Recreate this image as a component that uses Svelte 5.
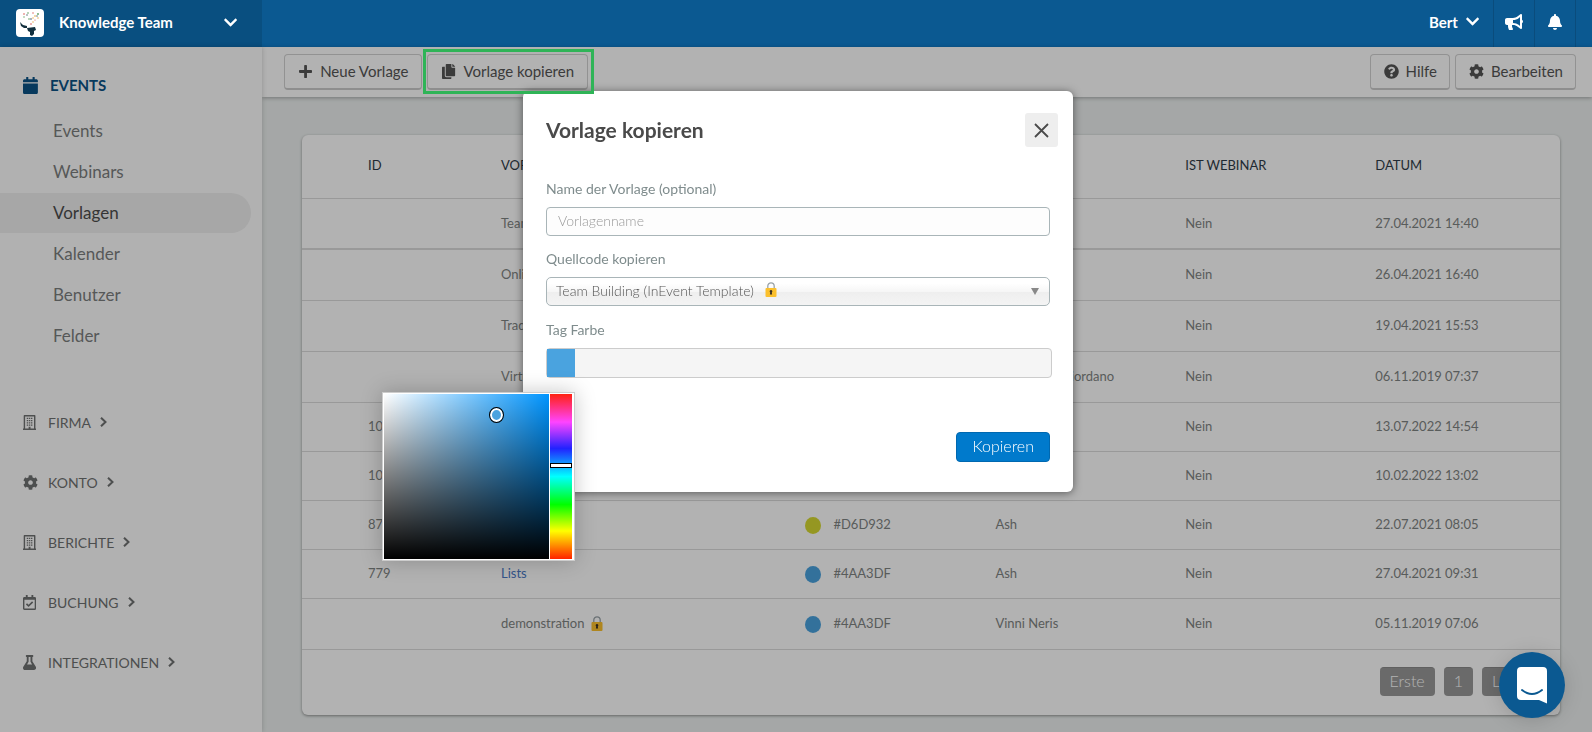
<script lang="ts">
  interface Template {
    id: string;
    name: string;
    color: string;
    author: string;
    date: string;
    locked?: boolean;
  }

  const icons = {
    chevronDown: {
      w: 448,
      d: 'M207.029 381.476L12.686 187.132c-9.373-9.373-9.373-24.569 0-33.941l22.667-22.667c9.357-9.357 24.522-9.375 33.901-.04L224 284.505l154.745-154.021c9.379-9.335 24.544-9.317 33.901.04l22.667 22.667c9.373 9.373 9.373 24.569 0 33.941L240.971 381.476c-9.373 9.372-24.569 9.372-33.942 0z',
    },
    calendar: {
      w: 448,
      d: 'M12 192h424c6.6 0 12 5.4 12 12v260c0 26.5-21.5 48-48 48H48c-26.5 0-48-21.5-48-48V204c0-6.6 5.4-12 12-12zm436-44v-36c0-26.5-21.5-48-48-48h-48V12c0-6.6-5.4-12-12-12h-40c-6.6 0-12 5.4-12 12v52H160V12c0-6.6-5.4-12-12-12h-40c-6.6 0-12 5.4-12 12v52H48C21.5 64 0 85.5 0 112v36c0 6.6 5.4 12 12 12h424c6.6 0 12-5.4 12-12z',
    },
    plus: {
      w: 448,
      d: 'M416 208H272V64c0-17.67-14.33-32-32-32h-32c-17.67 0-32 14.33-32 32v144H32c-17.67 0-32 14.33-32 32v32c0 17.67 14.33 32 32 32h144v144c0 17.67 14.33 32 32 32h32c17.67 0 32-14.33 32-32V304h144c17.67 0 32-14.33 32-32v-32c0-17.67-14.33-32-32-32z',
    },
    copy: {
      w: 448,
      d: 'M320 448v40c0 13.255-10.745 24-24 24H24c-13.255 0-24-10.745-24-24V120c0-13.255 10.745-24 24-24h72v296c0 30.879 25.121 56 56 56h168zm0-344V0H152c-13.255 0-24 10.745-24 24v368c0 13.255 10.745 24 24 24h272c13.255 0 24-10.745 24-24V128H344c-13.2 0-24-10.8-24-24zm120.971-31.029L375.029 7.029A24 24 0 0 0 358.059 0H352v96h96v-6.059a24 24 0 0 0-7.029-16.97z',
    },
    help: {
      w: 512,
      d: 'M504 256c0 136.997-111.043 248-248 248S8 392.997 8 256C8 119.083 119.043 8 256 8s248 111.083 248 248zM262.655 90c-54.497 0-89.255 22.957-116.549 63.758-3.536 5.286-2.353 12.415 2.715 16.258l34.699 26.31c5.205 3.947 12.621 3.008 16.665-2.122 17.864-22.658 30.113-35.797 57.303-35.797 20.429 0 45.698 13.148 45.698 32.958 0 14.976-12.363 22.667-32.534 33.976C247.128 238.528 216 254.941 216 296v4c0 6.627 5.373 12 12 12h56c6.627 0 12-5.373 12-12v-1.333c0-28.462 83.186-29.647 83.186-106.667 0-58.002-60.165-102-116.531-102zM256 338c-25.365 0-46 20.635-46 46 0 25.364 20.635 46 46 46s46-20.636 46-46c0-25.365-20.635-46-46-46z',
    },
    cog: {
      w: 512,
      d: 'M487.4 315.7l-42.6-24.6c4.3-23.2 4.3-47 0-70.2l42.6-24.6c4.9-2.8 7.1-8.6 5.5-14-11.1-35.6-30-67.8-54.7-94.6-3.8-4.1-10-5.1-14.8-2.3L380.8 110c-17.9-15.4-38.5-27.3-60.8-35.1V25.8c0-5.6-3.9-10.5-9.4-11.7-36.7-8.2-74.3-7.8-109.2 0-5.5 1.2-9.4 6.1-9.4 11.7V75c-22.2 7.9-42.8 19.8-60.8 35.1L88.7 85.5c-4.9-2.8-11-1.9-14.8 2.3-24.7 26.7-43.6 58.9-54.7 94.6-1.7 5.4.6 11.2 5.5 14L67.3 221c-4.3 23.2-4.3 47 0 70.2l-42.6 24.6c-4.9 2.8-7.1 8.6-5.5 14 11.1 35.6 30 67.8 54.7 94.6 3.8 4.1 10 5.1 14.8 2.3l42.6-24.6c17.9 15.4 38.5 27.3 60.8 35.1v49.2c0 5.6 3.9 10.5 9.4 11.7 36.7 8.2 74.3 7.8 109.2 0 5.5-1.2 9.4-6.1 9.4-11.7v-49.2c22.2-7.9 42.8-19.8 60.8-35.1l42.6 24.6c4.9 2.8 11 1.9 14.8-2.3 24.7-26.7 43.6-58.9 54.7-94.6 1.5-5.5-.7-11.3-5.6-14.1zM256 336c-44.1 0-80-35.9-80-80s35.9-80 80-80 80 35.9 80 80-35.9 80-80 80z',
    },
    bell: {
      w: 448,
      d: 'M224 512c35.32 0 63.97-28.65 63.97-64H160.03c0 35.35 28.65 64 63.97 64zm215.39-149.71c-19.32-20.76-55.47-51.99-55.47-154.29 0-77.7-54.48-139.9-127.94-155.16V32c0-17.67-14.32-32-31.98-32s-31.98 14.33-31.98 32v20.84C118.56 68.1 64.08 130.3 64.08 208c0 102.3-36.15 133.53-55.47 154.29-6 6.45-8.66 14.16-8.61 21.71.11 16.4 12.98 32 32.1 32h383.8c19.12 0 32-15.6 32.1-32 .05-7.55-2.61-15.27-8.61-21.71z',
    },
    bullhorn: {
      w: 576,
      d: 'M576 240c0-23.63-12.95-44.04-32-55.12V32.01C544 23.26 537.02 0 512 0c-7.12 0-14.19 2.38-19.98 7.02l-85.03 68.03C364.28 109.19 310.66 128 256 128H64c-35.35 0-64 28.65-64 64v96c0 35.35 28.65 64 64 64h33.7c-1.39 10.48-2.18 21.14-2.18 32 0 39.77 9.26 77.35 25.56 110.94 5.19 10.69 16.52 17.06 28.4 17.06h74.28c26.05 0 41.69-29.84 25.9-50.56-16.4-21.52-26.15-48.36-26.15-77.44 0-11.11 1.62-21.79 4.41-32H256c54.66 0 108.28 18.81 150.98 52.95l85.03 68.03a32.023 32.023 0 0 0 19.98 7.02c24.92 0 32-22.78 32-32V295.13C563.05 284.04 576 263.63 576 240zm-96 141.42l-33.05-26.44C392.95 311.78 325.12 288 256 288v-96c69.12 0 136.95-23.78 190.95-66.98L480 98.58v282.84z',
    },
    flask: {
      w: 448,
      d: 'M437.2 403.5L320 215V64h8c13.3 0 24-10.7 24-24V24c0-13.3-10.7-24-24-24H120c-13.3 0-24 10.7-24 24v16c0 13.3 10.7 24 24 24h8v151L10.8 403.5C-18.5 450.6 15.3 512 70.9 512h306.2c55.7 0 89.4-61.5 60.1-108.5zM137.9 320l48.2-77.6c3.7-5.2 5.8-11.6 5.8-18.4V64h64v160c0 6.9 2.2 13.2 5.8 18.4l48.2 77.6h-172z',
    },
    building: {
      w: 448,
      d: 'M48 0H400a24 24 0 0 1 24 24V464H448V512H0V464H24V24A24 24 0 0 1 48 0ZM72 48V464H192V400H256V464H376V48ZM128 96h48v40h-48zM200 96h48v40h-48zM272 96h48v40h-48zM128 172h48v40h-48zM200 172h48v40h-48zM272 172h48v40h-48zM128 248h48v40h-48zM200 248h48v40h-48zM272 248h48v40h-48zM128 324h48v40h-48zM200 324h48v40h-48zM272 324h48v40h-48z',
    },
    calendarCheck: {
      w: 448,
      d: 'M400 64h-48V12c0-6.627-5.373-12-12-12h-40c-6.627 0-12 5.373-12 12v52H160V12c0-6.627-5.373-12-12-12h-40c-6.627 0-12 5.373-12 12v52H48C21.49 64 0 85.49 0 112v352c0 26.51 21.49 48 48 48h352c26.51 0 48-21.49 48-48V112c0-26.51-21.49-48-48-48zm-6 400H54a6 6 0 0 1-6-6V160h352v298a6 6 0 0 1-6 6zm-52.849-200.65L198.842 404.519c-4.705 4.667-12.303 4.637-16.971-.068l-75.091-75.699c-4.667-4.705-4.637-12.303.068-16.971l22.719-22.536c4.705-4.667 12.303-4.637 16.97.069l44.104 44.461 111.072-110.181c4.705-4.667 12.303-4.637 16.971.068l22.536 22.718c4.667 4.705 4.636 12.303-.069 16.97z',
    },
  };

  type IconName = keyof typeof icons;

  const menu = ['Events', 'Webinars', 'Vorlagen', 'Kalender', 'Benutzer', 'Felder'];

  const sections: { label: string; icon: IconName }[] = [
    { label: 'FIRMA', icon: 'building' },
    { label: 'KONTO', icon: 'cog' },
    { label: 'BERICHTE', icon: 'building' },
    { label: 'BUCHUNG', icon: 'calendarCheck' },
    { label: 'INTEGRATIONEN', icon: 'flask' },
  ];

  const templates: Template[] = [
    { id: '', name: 'Team', color: '#4AA3DF', author: 'Ash', date: '27.04.2021 14:40', locked: true },
    { id: '', name: 'Online', color: '#4AA3DF', author: 'Ash', date: '26.04.2021 16:40', locked: true },
    { id: '', name: 'Trade', color: '#4AA3DF', author: 'Ash', date: '19.04.2021 15:53', locked: true },
    { id: '', name: 'Virtual', color: '#4AA3DF', author: 'Mauricio F. Giordano', date: '06.11.2019 07:37', locked: true },
    { id: '1065', name: 'Event', color: '#4AA3DF', author: 'Ash', date: '13.07.2022 14:54' },
    { id: '1002', name: 'Event', color: '#4AA3DF', author: 'Ash', date: '10.02.2022 13:02' },
    { id: '870', name: 'Event', color: '#D6D932', author: 'Ash', date: '22.07.2021 08:05' },
    { id: '779', name: 'Lists', color: '#4AA3DF', author: 'Ash', date: '27.04.2021 09:31' },
    { id: '', name: 'demonstration', color: '#4AA3DF', author: 'Vinni Neris', date: '05.11.2019 07:06', locked: true },
  ];

  let active = $state('Vorlagen');
  let modalOpen = $state(true);
  let pickerOpen = $state(true);
  let templateName = $state('');
  let hue = $state(205);
</script>

{#snippet icon(name: IconName, size: number)}
  <svg class="icon" height={size} viewBox="0 0 {icons[name].w} 512" aria-hidden="true">
    <path fill="currentColor" fill-rule="evenodd" d={icons[name].d} />
  </svg>
{/snippet}

{#snippet lock()}
  <svg class="lock" width="12" height="15" viewBox="0 0 12 15" aria-hidden="true">
    <path d="M2.8 7V4a3.2 3.2 0 0 1 6.4 0v3" fill="none" stroke="#9aa3a8" stroke-width="1.3" />
    <rect x="0.5" y="6" width="11" height="9" rx="1" fill="#fbc02d" />
    <path d="M6 8a1.4 1.4 0 0 1 .8 2.5l.3 2.1H4.900l.3-2.1A1.400 1.400 0 0 1 6 8z" fill="#3b3022" />
  </svg>
{/snippet}

<div class="page">
  <header class="topbar">
    <button class="team">
      <svg class="logo" width="28" height="28" viewBox="0 0 28 28" aria-hidden="true">
        <rect width="28" height="28" rx="4" fill="#fff" />
        <path d="M11 19l8-1 1 3-2 1v3l-2 2-2-1v-3l-2-1z" fill="#12303f" />
        <path d="M4 13l3 3 4 1v2H8l-3-2z" fill="#12303f" />
        <g fill="#d9534f"><circle cx="8" cy="5" r="0.8" /><circle cx="17" cy="4" r="0.7" /><circle cx="15" cy="15" r="0.8" /><circle cx="19" cy="11" r="0.6" /></g>
        <g fill="#5ba05f"><circle cx="12" cy="4" r="0.8" /><circle cx="22" cy="5" r="0.9" /><circle cx="13" cy="10" r="0.8" /><circle cx="8" cy="8" r="0.7" /></g>
        <g fill="#e6a23c"><circle cx="19" cy="7" r="0.8" /><circle cx="17" cy="9" r="0.7" /><circle cx="22" cy="9" r="0.7" /><circle cx="17" cy="13" r="0.7" /></g>
        <g fill="#3a5668"><circle cx="11" cy="6" r="0.7" /><circle cx="21" cy="7" r="0.7" /><circle cx="15" cy="10" r="0.8" /></g>
      </svg>
      <span class="team-name">Knowledge Team</span>
      {@render icon('chevronDown', 15)}
    </button>
    <div class="tools">
      <button class="user">Bert {@render icon('chevronDown', 15)}</button>
      <button aria-label="Ankündigungen">{@render icon('bullhorn', 16)}</button>
      <button aria-label="Benachrichtigungen">{@render icon('bell', 16)}</button>
    </div>
  </header>

  <div class="body">
    <nav class="sidebar" aria-label="Hauptmenü">
      <h2>{@render icon('calendar', 17)} EVENTS</h2>
      <ul class="menu">
        {#each menu as item (item)}
          <li>
            <a href="#{item.toLowerCase()}" class:active={active === item} onclick={() => (active = item)}>{item}</a>
          </li>
        {/each}
      </ul>
      <ul class="sections">
        {#each sections as section (section.label)}
          <li>
            <button>
              <span class="section-icon">{@render icon(section.icon, 15)}</span>
              {section.label}
              <svg width="7" height="10" viewBox="0 0 7 10" aria-hidden="true">
                <path d="M1 .700L5.500 5 1 9.300" fill="none" stroke="currentColor" stroke-width="2" />
              </svg>
            </button>
          </li>
        {/each}
      </ul>
    </nav>

    <main>
      <div class="toolbar">
        <button>{@render icon('plus', 15)} Neue Vorlage</button>
        <button onclick={() => (modalOpen = true)}>{@render icon('copy', 15)} Vorlage kopieren</button>
        <div class="push">
          <button>{@render icon('help', 15)} Hilfe</button>
          <button>{@render icon('cog', 15)} Bearbeiten</button>
        </div>
      </div>

      <section class="card">
        <table>
          <thead>
            <tr>
              <th class="col-id">ID</th>
              <th class="col-name">VORLAGE</th>
              <th class="col-text">FARBE</th>
              <th class="col-text">AUTOR</th>
              <th class="col-text">IST WEBINAR</th>
              <th>DATUM</th>
            </tr>
          </thead>
          <tbody>
            {#each templates as t (t.date)}
              <tr class:locked={t.locked}>
                <td class="col-id">{t.id}</td>
                <td>
                  {#if t.locked}
                    {t.name} {@render lock()}
                  {:else}
                    <a href="#{t.id}">{t.name}</a>
                  {/if}
                </td>
                <td><span class="dot" style="background: {t.color}"></span>{t.color}</td>
                <td>{t.author}</td>
                <td>Nein</td>
                <td>{t.date}</td>
              </tr>
            {/each}
          </tbody>
        </table>
        <div class="pager">
          <button>Erste</button>
          <button>1</button>
          <button>Letzte</button>
        </div>
      </section>
    </main>
  </div>
</div>

{#if modalOpen}
  <div class="overlay"></div>
  <div class="modal" role="dialog" aria-labelledby="modal-title">
    <div class="modal-head">
      <h1 id="modal-title">Vorlage kopieren</h1>
      <button class="close" aria-label="Schließen" onclick={() => (modalOpen = false)}>
        <svg width="15" height="15" viewBox="0 0 15 15" aria-hidden="true">
          <path d="M1 1l13 13M14 1L1 14" stroke="#4a4a4a" stroke-width="1.800" />
        </svg>
      </button>
    </div>
    <form onsubmit={(e) => e.preventDefault()}>
      <label for="template-name">Name der Vorlage (optional)</label>
      <input id="template-name" type="text" placeholder="Vorlagenname" bind:value={templateName} />

      <label for="source">Quellcode kopieren</label>
      <div class="select">
        <select id="source">
          <option>Team Building (InEvent Template)</option>
        </select>
        {@render lock()}
      </div>

      <label for="tag-color">Tag Farbe</label>
      <button id="tag-color" class="color-field" type="button" onclick={() => (pickerOpen = !pickerOpen)}>
        <span class="swatch"></span>
      </button>

      <button class="submit" type="submit">Kopieren</button>
    </form>

    {#if pickerOpen}
      <div class="picker">
        <div class="shade" style="background-color: hsl({hue} 100% 50%)">
          <button class="cursor" type="button" aria-label="Sättigung und Helligkeit"></button>
        </div>
        <input class="hue" type="range" min="0" max="360" bind:value={hue} aria-label="Farbton" />
      </div>
    {/if}
  </div>
{/if}

<div class="highlight"></div>

<button class="chat" aria-label="Chat öffnen">
  <svg width="30" height="37" viewBox="0 0 30 37" aria-hidden="true">
    <path d="M4 0h22a4 4 0 0 1 4 4v32.500L22 33H4a4 4 0 0 1-4-4V4a4 4 0 0 1 4-4z" fill="#fff" />
    <path d="M5 23q10 8 20 0" fill="none" stroke="#0b5991" stroke-width="2" stroke-linecap="round" />
  </svg>
</button>

<style>
  :global(body) {
    margin: 0;
    background: #ecf0ef;
    font-family: Lato, sans-serif;
    color: #7f8483;
  }

  button,
  input,
  select {
    font-family: inherit;
    box-sizing: border-box;
    cursor: pointer;
  }

  ul {
    list-style: none;
    margin: 0;
    padding: 0;
  }

  .icon {
    flex: none;
  }

  .page {
    display: flex;
    flex-direction: column;
    min-height: 100vh;
  }

  .topbar {
    display: flex;
    justify-content: space-between;
    height: 47px;
    background: #0b5991;
  }

  .topbar button {
    display: flex;
    align-items: center;
    border: none;
    background: none;
    color: #fff;
    font-size: 15px;
    font-weight: 700;
  }

  .topbar .team {
    width: 262px;
    padding: 0 25px 2px 16px;
    gap: 15px;
    background: #094f80;
  }

  .team-name {
    flex: 1;
    padding-bottom: 2px;
    text-align: left;
  }

  .tools {
    display: flex;
    padding-right: 16px;
  }

  .tools button {
    width: 41px;
    padding: 0 0 4px;
    justify-content: center;
    border-right: 1px solid #0a4c7c;
  }

  .tools .user {
    width: auto;
    padding-right: 14px;
    gap: 8px;
  }

  .body {
    display: flex;
    flex: 1;
  }

  .sidebar {
    flex: none;
    width: 262px;
    background: #fefefe;
    box-shadow: 0 0 5px rgba(0, 0, 0, 0.2);
    z-index: 1;
  }

  h2 {
    display: flex;
    align-items: center;
    gap: 12px;
    height: 24px;
    margin: 26px 0 14px 23px;
    font-size: 15px;
    font-weight: 700;
    color: #0b5286;
  }

  .menu a {
    display: block;
    width: 198px;
    margin-bottom: 1px;
    padding-left: 53px;
    border-radius: 0 20px 20px 0;
    font-size: 17px;
    line-height: 40px;
    color: #7c7f7f;
    text-decoration: none;
  }

  .menu .active {
    background: #efefef;
    color: #4d4d4d;
  }

  .sections {
    display: grid;
    gap: 20px;
    margin-top: 46px;
  }

  .sections button {
    display: flex;
    align-items: center;
    gap: 9px;
    height: 40px;
    padding: 0 0 0 23px;
    border: none;
    background: none;
    font-size: 14px;
    color: #6f7171;
  }

  .section-icon {
    display: flex;
    width: 16px;
  }

  main {
    flex: 1;
    min-width: 0;
  }

  .toolbar {
    display: flex;
    align-items: center;
    gap: 5px;
    height: 50px;
    padding: 0 16px 0 22px;
    box-sizing: border-box;
    background: #fff;
    box-shadow: 0 1px 4px rgba(0, 0, 0, 0.3);
  }

  .toolbar button {
    display: flex;
    align-items: center;
    gap: 8px;
    height: 36px;
    padding: 0 13px 1px 14px;
    border: 1px solid #d2d2d2;
    border-bottom: 2px solid #ccc;
    border-radius: 4px;
    background: #fff;
    font-size: 15px;
    color: #555;
  }

  .push {
    display: flex;
    gap: 5px;
    margin-left: auto;
  }

  .push button {
    gap: 7px;
    padding: 0 12px 1px 13px;
  }

  .card {
    margin: 38px 32px 16px 40px;
    background: #fff;
    border-radius: 6px;
    box-shadow: 0 1px 3px rgba(0, 0, 0, 0.4);
  }

  table {
    width: 100%;
    table-layout: fixed;
    border-collapse: separate;
    border-spacing: 0;
    font-size: 13px;
    line-height: 18px;
  }

  th,
  td {
    box-sizing: border-box;
    padding: 0 0 2px;
    border-bottom: 1px solid #dcdcdc;
    text-align: left;
    white-space: nowrap;
  }

  th {
    height: 64px;
    padding-bottom: 3px;
    font-weight: 400;
    color: #2f3c48;
  }

  td {
    height: 49px;
  }

  .locked td {
    height: 51px;
  }

  tbody tr:first-child td {
    border-bottom-width: 2px;
  }

  .col-id {
    width: 199px;
    padding-left: 66px;
  }

  .col-name {
    width: 24.2%;
  }

  .col-text {
    width: 15.1%;
  }

  td a {
    color: #4a78c4;
    text-decoration: none;
  }

  .lock {
    margin-left: 3px;
    vertical-align: -3px;
  }

  .dot {
    display: inline-block;
    width: 16px;
    height: 17px;
    margin-right: 12px;
    border-radius: 50%;
    vertical-align: -5px;
  }

  .pager {
    display: flex;
    justify-content: flex-end;
    gap: 9px;
    height: 65px;
    padding: 17px 16px 0 0;
    box-sizing: border-box;
  }

  .pager button {
    height: 29px;
    padding: 0 10px 3px;
    border: none;
    border-top: 1px solid #8a8a8a;
    border-radius: 4px;
    background: #999;
    font-size: 16px;
    font-weight: 300;
    color: #fff;
  }

  .overlay {
    position: fixed;
    inset: 47px 0 0;
    z-index: 2;
    background: rgba(0, 0, 0, 0.3);
  }

  .modal {
    position: absolute;
    top: 91px;
    left: calc(50% - 273px);
    z-index: 3;
    width: 550px;
    padding: 22px 23px 30px;
    box-sizing: border-box;
    border-radius: 6px;
    background: #fff;
    box-shadow: 0 1px 8px rgba(0, 0, 0, 0.5);
  }

  .modal-head {
    display: flex;
    justify-content: space-between;
    align-items: center;
    margin-right: -8px;
  }

  h1 {
    margin: 0;
    padding-bottom: 2px;
    font-size: 21px;
    font-weight: 700;
    color: #4a4a4a;
  }

  .close {
    display: grid;
    place-items: center;
    width: 33px;
    height: 34px;
    padding: 0;
    border: none;
    border-radius: 3px;
    background: #eee;
  }

  form {
    display: flex;
    flex-direction: column;
    padding-top: 32px;
  }

  label {
    height: 20px;
    margin-bottom: 8px;
    font-size: 14px;
    line-height: 20px;
    color: #7f8c8d;
  }

  input[type='text'] {
    height: 29px;
    margin-bottom: 13px;
    padding: 0 11px 2px;
    border: 1px solid #a9b5b8;
    border-radius: 4px;
    background: #fdfdfd;
    font-size: 14px;
    font-weight: 300;
    cursor: text;
  }

  input::placeholder {
    color: #999;
  }

  .select {
    position: relative;
    margin-bottom: 14px;
  }

  .select::after {
    content: '';
    position: absolute;
    top: 11px;
    right: 11px;
    border: 4px solid transparent;
    border-top: 7px solid #888;
    border-bottom: 0;
    pointer-events: none;
  }

  select {
    width: 100%;
    height: 29px;
    padding: 0 9px 3px;
    border: 1px solid #a9b5b8;
    border-radius: 5px;
    appearance: none;
    background: linear-gradient(#fff 20%, #f6f6f6 50%, #eee 52%, #f4f4f4 100%);
    font-size: 14px;
    font-weight: 300;
    color: #555;
  }

  .select .lock {
    position: absolute;
    top: 5px;
    left: 219px;
    margin: 0;
  }

  .color-field {
    height: 30px;
    margin-right: -2px;
    padding: 0;
    border: 1px solid #ccc;
    border-radius: 4px;
    background: #f5f5f5;
    text-align: left;
  }

  .swatch {
    display: block;
    width: 28px;
    height: 28px;
    background: #4aa3df;
  }

  .submit {
    align-self: flex-end;
    height: 30px;
    margin-top: 54px;
    padding: 0 15px 4px;
    border: 1px solid #0068b0;
    border-radius: 4px;
    background: #007acc;
    font-size: 16px;
    font-weight: 300;
    color: #fff;
  }

  .picker {
    position: absolute;
    top: 301px;
    left: -141px;
    display: flex;
    gap: 1px;
    padding: 1px 2px 1px 1px;
    border: 1px solid #ccc;
    background: #fff;
    box-shadow: 0 0 20px rgba(0, 0, 0, 0.22);
  }

  .shade {
    position: relative;
    width: 165px;
    height: 165px;
    background-image: linear-gradient(transparent, #000), linear-gradient(90deg, #fff, transparent);
  }

  .cursor {
    position: absolute;
    top: 13px;
    left: 105px;
    width: 15px;
    height: 16px;
    padding: 0;
    border: 1px solid #000;
    border-radius: 50%;
    background: #4aa3df;
    box-shadow: inset 0 0 0 2px #fff;
  }

  .hue {
    width: 22px;
    height: 165px;
    margin: 0;
    appearance: none;
    writing-mode: vertical-lr;
    direction: rtl;
    background: linear-gradient(#f21, #f4f 17%, #22f 33%, #0ff 50%, #0f0 67%, #ff0 83%, #f20);
  }

  .hue::-webkit-slider-thumb {
    appearance: none;
    width: 22px;
    height: 5px;
    border: 1px solid #000;
    background: #fff;
    box-sizing: border-box;
  }

  .highlight {
    position: absolute;
    top: 49px;
    left: 423px;
    z-index: 4;
    width: 171px;
    height: 45px;
    box-sizing: border-box;
    border: 3px solid #2fb457;
    pointer-events: none;
  }

  .chat {
    position: fixed;
    right: 27px;
    bottom: 14px;
    z-index: 5;
    display: grid;
    place-items: center;
    width: 66px;
    height: 66px;
    padding: 0;
    border: none;
    border-radius: 50%;
    background: #0b5991;
    box-shadow: 0 2px 20px rgba(0, 0, 0, 0.15);
  }
</style>
